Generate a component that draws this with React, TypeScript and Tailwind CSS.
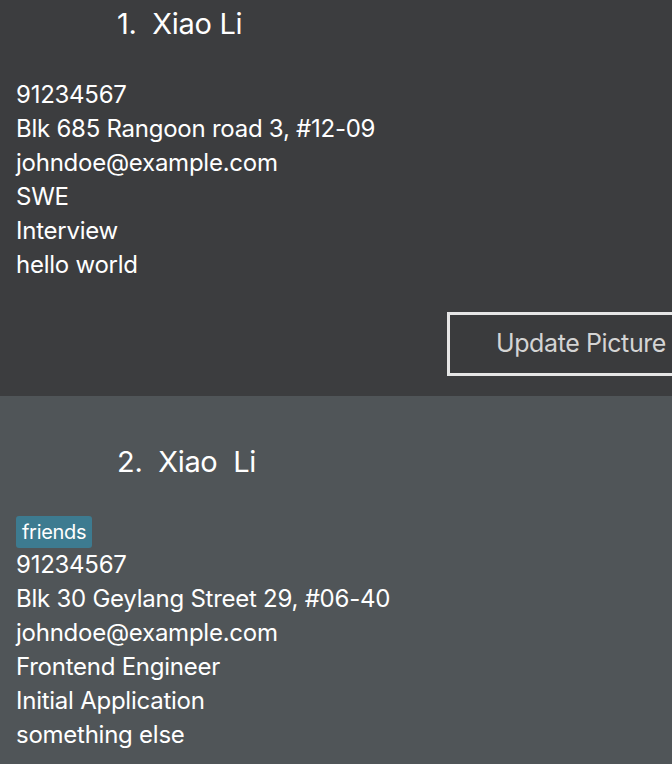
import React from 'react'

type Person = {
  index: number
  name: string
  tags: string[]
  phone: string
  address: string
  email: string
  role: string
  status: string
  note: string
}

const people: Person[] = [
  {
    index: 1,
    name: 'Xiao Li',
    tags: [],
    phone: '91234567',
    address: 'Blk 685 Rangoon road 3, #12-09',
    email: 'johndoe@example.com',
    role: 'SWE',
    status: 'Interview',
    note: 'hello world',
  },
  {
    index: 2,
    name: 'Xiao  Li',
    tags: ['friends'],
    phone: '91234567',
    address: 'Blk 30 Geylang Street 29, #06-40',
    email: 'johndoe@example.com',
    role: 'Frontend Engineer',
    status: 'Initial Application',
    note: 'something else',
  },
]

const PersonCard: React.FC<{ p: Person; first: boolean }> = ({ p, first }) => {
  return (
    <div
      className={
        first
          ? 'bg-[#3c3d3f] pl-4 pt-[7px] pb-5 overflow-hidden'
          : 'bg-[#505558] pl-4 pt-[49px] pb-6 overflow-hidden'
      }
    >
      {/* Header */}
      <div className="pl-[101px] text-[29px] leading-[34px] text-white whitespace-pre tracking-[-0.3px]">
        {p.index}.  {p.name}
      </div>

      <div className="mt-[37px]">
        {p.tags.length > 0 && (
          <div className="flex gap-2">
            {p.tags.map((t) => (
              <span
                key={t}
                className="bg-[#3d7b90] text-white text-[20px] leading-[32px] px-[6px] rounded-[3px] tracking-[-0.3px]"
              >
                {t}
              </span>
            ))}
          </div>
        )}
        <div className="text-[24px] leading-[34px] text-white tracking-[-0.25px]">
          <div>{p.phone}</div>
          <div>{p.address}</div>
          <div>{p.email}</div>
          <div>{p.role}</div>
          <div>{p.status}</div>
          <div>{p.note}</div>
        </div>
      </div>

      {/* Picture */}
      {first && (
        <div className="mt-[30px] flex justify-end">
          <button className="-mr-[20px] w-[245px] h-[64px] border-[3px] border-[#e6e6e6] bg-[#3a3b3d] text-left pl-[46px] text-[25px] text-[#d4d4d4] whitespace-nowrap tracking-[-0.4px]">
            Update Picture
          </button>
        </div>
      )}
    </div>
  )
}

const App: React.FC = () => {
  return (
    <div
      className="w-[672px] h-[764px] overflow-hidden bg-[#505558]"
      style={{ fontFamily: 'Inter, "Noto Sans", sans-serif' }}
    >
      {people.map((p, i) => (
        <PersonCard key={p.index} p={p} first={i === 0} />
      ))}
    </div>
  )
}

export default App
